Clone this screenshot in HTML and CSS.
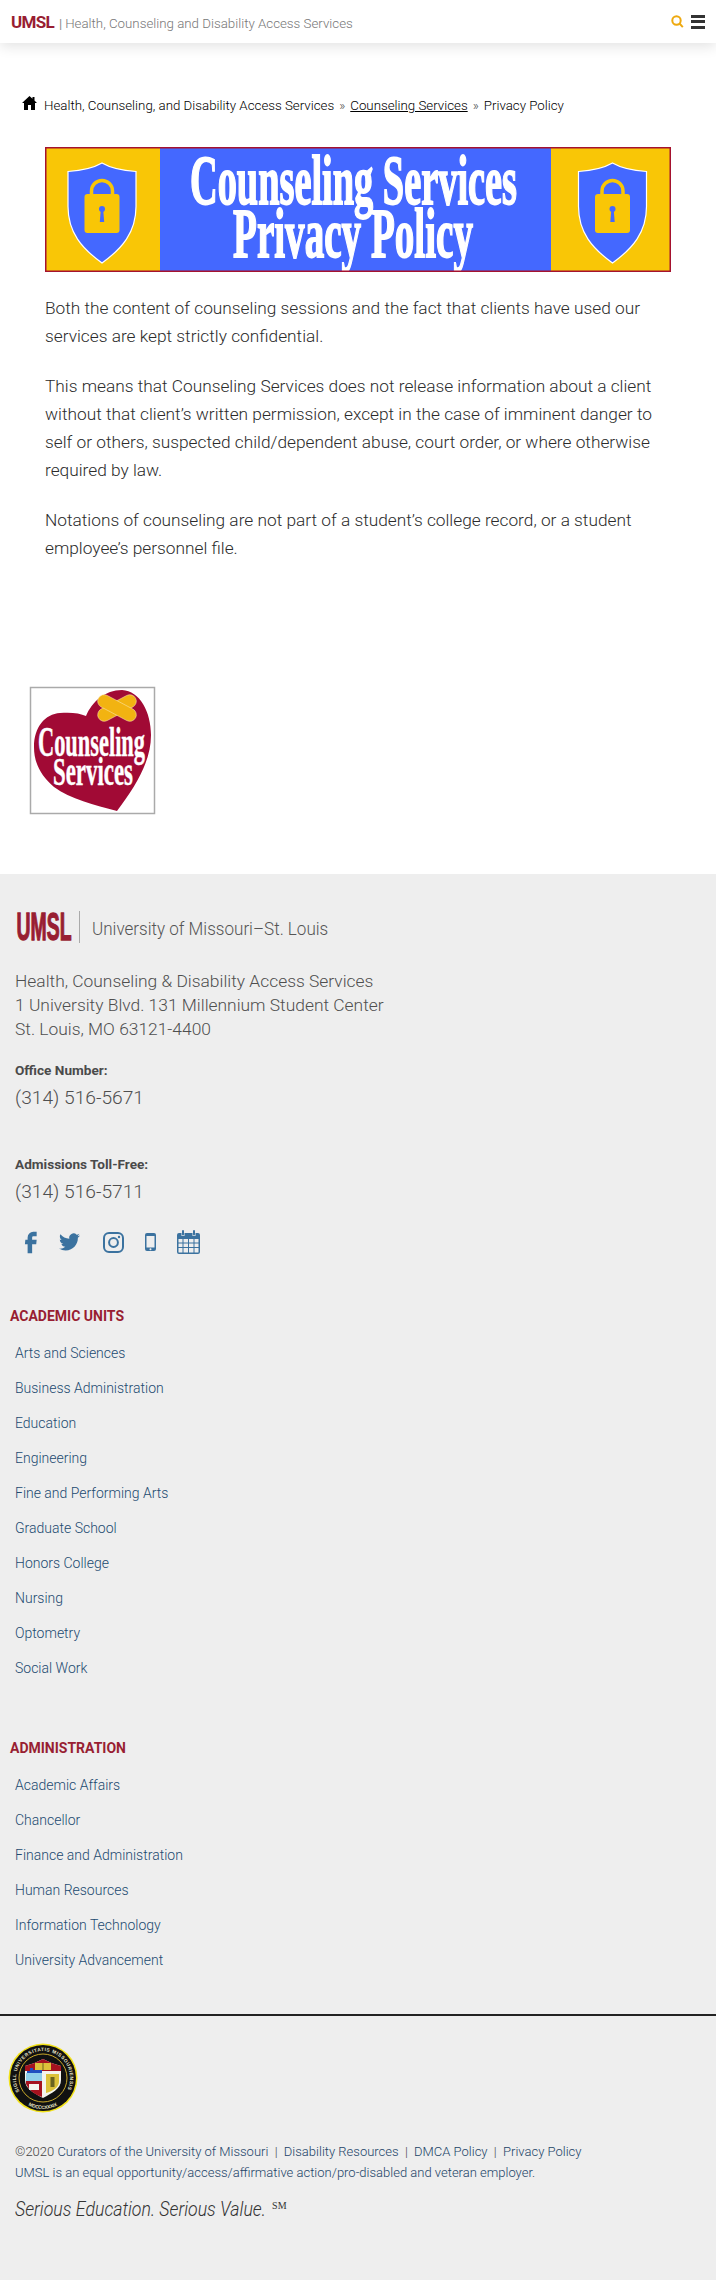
FILE: index.html
```html
<!DOCTYPE html>
<html lang="en">
<head>
<meta charset="utf-8">
<title>Privacy Policy</title>
<link rel="stylesheet" href="styles.css">
</head>
<body>
<header class="topbar">
  <div class="site-id"><b class="site-umsl">UMSL</b><span class="site-sep">|</span><span class="site-name">Health, Counseling and Disability Access Services</span></div>
  <div class="top-tools">
    <svg class="search-icon" viewBox="0 0 13 13"><circle cx="5.5" cy="5.5" r="4.2"/><path d="M8.5 8.5l3.3 3.6"/></svg>
    <span class="burger"><i></i><i></i><i></i></span>
  </div>
</header>

<main>
  <nav class="crumbs">
    <svg class="home-icon" viewBox="0 0 15 14"><path d="M7.5 0L0 7h2v7h4V9h3v5h4V7h2l-2.5-2.4V1h-2v1.7z"/></svg>
    <span>Health, Counseling, and Disability Access Services</span><span class="raquo">»</span><a href="#">Counseling Services</a><span class="raquo">»</span><span>Privacy Policy</span>
  </nav>

  <svg class="banner" viewBox="0 0 626 125">
    <rect class="b-yellow" x="0" y="0" width="626" height="125"/>
    <rect class="b-blue" x="115" y="1" width="391" height="123"/>
    <g>
      <path class="b-shield" d="M57 16q-12 7-34 8.500v35c0 26 14 42 34 56.500c20-14.500 34-30.500 34-56.500v-35q-22-1.500-34-8.500z"/>
      <path class="b-hoop" d="M46.500 50V44a10.500 10.500 0 0 1 21 0v6"/>
      <rect class="b-body" x="39.500" y="47" width="35" height="39" rx="3"/>
      <circle class="b-key" cx="57" cy="62" r="3"/>
      <path class="b-key" d="M55.800 63h2.400l1 12h-4.400z"/>
    </g>
    <g transform="translate(510.500 0)">
      <path class="b-shield" d="M57 16q-12 7-34 8.500v35c0 26 14 42 34 56.500c20-14.500 34-30.500 34-56.500v-35q-22-1.500-34-8.500z"/>
      <path class="b-hoop" d="M46.500 50V44a10.500 10.500 0 0 1 21 0v6"/>
      <rect class="b-body" x="39.500" y="47" width="35" height="39" rx="3"/>
      <circle class="b-key" cx="57" cy="62" r="3"/>
      <path class="b-key" d="M55.800 63h2.400l1 12h-4.400z"/>
    </g>
    <text class="b-title" x="145" y="57" textLength="327" lengthAdjust="spacingAndGlyphs">Counseling Services</text>
    <text class="b-title" x="188" y="110" textLength="240" lengthAdjust="spacingAndGlyphs">Privacy Policy</text>
    <rect class="b-frame" x="0.75" y="0.75" width="624.5" height="123.5"/>
  </svg>

  <article class="copy">
    <p>Both the content of counseling sessions and the fact that clients have used our services are kept strictly confidential.</p>
    <p>This means that Counseling Services does not release information about a client without that client’s written permission, except in the case of imminent danger to self or others, suspected child/dependent abuse, court order, or where otherwise required by law.</p>
    <p>Notations of counseling are not part of a student’s college record, or a student employee’s personnel file.</p>
  </article>

  <svg class="heart-logo" viewBox="0 0 125 127">
    <rect class="h-frame" x="0.500" y="0.500" width="124" height="126"/>
    <path class="h-heart" d="M56 29C62 15 75 3 92 3C110 4 121 25 121 48C121 75 105 100 87 124C65 118 40 112 24 100C10 88 4 75 4 60C4 40 15 27 30 26C40 25 50 26 56 29Z"/>
    <g class="h-band">
      <rect x="66" y="14.500" width="42" height="13" rx="6.500" transform="rotate(-28 87 21)"/>
      <rect x="66" y="14.500" width="42" height="13" rx="6.500" transform="rotate(28 87 21)"/>
    </g>
    <text class="h-text" x="8" y="69" textLength="107" lengthAdjust="spacingAndGlyphs">Counseling</text>
    <text class="h-text h-text2" x="23" y="98" textLength="80" lengthAdjust="spacingAndGlyphs">Services</text>
  </svg>
</main>

<footer class="site-footer">
  <div class="brand">
    <svg class="brand-mark" viewBox="0 0 57 28"><text class="brand-umsl" x="0.500" y="27" textLength="55" lengthAdjust="spacingAndGlyphs">UMSL</text></svg>
    <span class="brand-line"></span>
    <span class="brand-name">University of Missouri–St. Louis</span>
  </div>

  <address class="addr">Health, Counseling &amp; Disability Access Services<br>1 University Blvd. 131 Millennium Student Center<br>St. Louis, MO 63121-4400</address>

  <div class="ph-label ph-first">Office Number:</div>
  <div class="ph-num">(314) 516-5671</div>
  <div class="ph-label ph-second">Admissions Toll-Free:</div>
  <div class="ph-num">(314) 516-5711</div>

  <div class="socials">
    <svg class="ic ic-f" viewBox="6 2.500 11.500 19"><path d="M9.198 21.500h4v-8.010h3.604l.396-3.980h-4V7.500a1 1 0 0 1 1-1h3v-4h-3a5 5 0 0 0-5 5v2.010h-2l-.396 3.980h2.396z"/></svg>
    <svg class="ic ic-t" viewBox="0 2 24 20"><path d="M23.953 4.570a10 10 0 01-2.825.775 4.958 4.958 0 002.163-2.723c-.951.555-2.005.959-3.127 1.184a4.920 4.920 0 00-8.384 4.482C7.690 8.095 4.067 6.130 1.640 3.162a4.822 4.822 0 00-.666 2.475c0 1.710.870 3.213 2.188 4.096a4.904 4.904 0 01-2.228-.616v.060a4.923 4.923 0 003.946 4.827 4.996 4.996 0 01-2.212.085 4.936 4.936 0 004.604 3.417 9.867 9.867 0 01-6.102 2.105c-.390 0-.779-.023-1.170-.067a13.995 13.995 0 007.557 2.209c9.053 0 13.998-7.496 13.998-13.985 0-.210 0-.420-.015-.630A9.935 9.935 0 0024 4.590z"/></svg>
    <svg class="ic ic-i" viewBox="0 0 21 21"><rect class="ic-stroke" x="1" y="1" width="19" height="19" rx="5"/><circle class="ic-stroke" cx="10.500" cy="10.500" r="4.400"/><circle cx="16" cy="5" r="1.200"/></svg>
    <svg class="ic ic-p" viewBox="0 0 11 18"><path fill-rule="evenodd" d="M2 0h7a2 2 0 0 1 2 2v14a2 2 0 0 1-2 2H2a2 2 0 0 1-2-2V2a2 2 0 0 1 2-2zM1.500 3v11.500h8V3zM5.500 15.300a1 1 0 1 0 0 2a1 1 0 0 0 0-2z"/></svg>
    <svg class="ic ic-c" viewBox="0 0 23 24"><path fill-rule="evenodd" d="M2 3h2.500v3h3V3h8v3h3V3H21a2 2 0 0 1 2 2v17a2 2 0 0 1-2 2H2a2 2 0 0 1-2-2V5a2 2 0 0 1 2-2zM1.500 9v3.500h4V9zM6.500 9v3.500h4.500V9zM12 9v3.500h4.500V9zM17.500 9v3.500h4V9zM1.500 13.500V17h4v-3.500zM6.500 13.500V17h4.500v-3.500zM12 13.500V17h4.500v-3.500zM17.500 13.500V17h4v-3.500zM1.500 18v4a.5.5 0 0 0 .5.500h3.500V18zM6.500 18v4.500H11V18zM12 18v4.500h4.500V18zM17.500 18v4.500H21a.5.5 0 0 0 .5-.5v-4z"/><rect x="5" y="0" width="2" height="5.500" rx="1"/><rect x="16" y="0" width="2" height="5.500" rx="1"/></svg>
  </div>

  <section class="unit unit-first">
    <h2>ACADEMIC UNITS</h2>
    <ul>
      <li><a href="#">Arts and Sciences</a></li>
      <li><a href="#">Business Administration</a></li>
      <li><a href="#">Education</a></li>
      <li><a href="#">Engineering</a></li>
      <li><a href="#">Fine and Performing Arts</a></li>
      <li><a href="#">Graduate School</a></li>
      <li><a href="#">Honors College</a></li>
      <li><a href="#">Nursing</a></li>
      <li><a href="#">Optometry</a></li>
      <li><a href="#">Social Work</a></li>
    </ul>
  </section>
  <section class="unit">
    <h2>ADMINISTRATION</h2>
    <ul>
      <li><a href="#">Academic Affairs</a></li>
      <li><a href="#">Chancellor</a></li>
      <li><a href="#">Finance and Administration</a></li>
      <li><a href="#">Human Resources</a></li>
      <li><a href="#">Information Technology</a></li>
      <li><a href="#">University Advancement</a></li>
    </ul>
  </section>

  <hr class="rule">

  <svg class="seal" viewBox="0 0 70 70">
    <defs>
      <path id="seal-top" d="M11.600 48.500A27 27 0 1 1 58.400 48.500"/>
      <path id="seal-bot" d="M19.500 61.800A31 31 0 0 0 50.500 61.800"/>
    </defs>
    <circle class="s-rim" cx="35" cy="35" r="34.500"/>
    <circle class="s-black" cx="35" cy="35" r="33"/>
    <circle class="s-ring" cx="35" cy="35" r="24"/>
    <text class="s-txt"><textPath href="#seal-top" textLength="110">SIGILL UNIVERSITATIS MISSOURIENSIS</textPath></text>
    <text class="s-txt"><textPath href="#seal-bot" startOffset="1" textLength="30">MDCCCXXXIX</textPath></text>
    <path class="s-white" d="M17 23q9-2 18-7q9 5 18 7v14c0 9-9 13-18 18c-9-5-18-9-18-18z"/>
    <path class="s-red" d="M17 23q9-2 18-7q9 5 18 7v5H17z"/>
    <rect class="s-gold" x="27" y="20" width="16" height="7"/>
    <path class="s-dark" d="M34.500 20h1v7h-1z"/>
    <path class="s-blue" d="M19 30h15v-3H25v-2h-3v3h-3z"/>
    <rect class="s-sky" x="18" y="30" width="16" height="8"/>
    <path class="s-red" d="M18 38h16v16q-12-4-16-13z"/>
    <rect class="s-white" x="21" y="41" width="10" height="6"/>
    <path class="s-gold" d="M38 31h13v8c0 5-6 9-13 11z"/>
    <path class="s-dark" d="M42.500 34h4v10h-4z"/>
  </svg>

  <div class="legal">
    <p><span class="legal-gray">©2020</span> <a href="#">Curators of the University of Missouri</a><span class="legal-pipe">|</span><a href="#">Disability Resources</a><span class="legal-pipe">|</span><a href="#">DMCA Policy</a><span class="legal-pipe">|</span><a href="#">Privacy Policy</a></p>
    <p><a href="#">UMSL is an equal opportunity/access/affirmative action/pro-disabled and veteran employer.</a></p>
  </div>
  <p class="slogan"><em class="slogan-text">Serious Education. Serious Value.</em><sup>SM</sup></p>
</footer>
</body>
</html>
```

FILE: styles.css
```css
* { box-sizing: border-box; }
html, body { margin: 0; padding: 0; background: #fff; }
body { font-family: Roboto, "Liberation Sans", sans-serif; color: #444; overflow-x: hidden; }
a { color: inherit; text-decoration: none; }
svg { display: block; overflow: visible; }

.topbar { height: 43px; background: #fff; box-shadow: 0 3px 14px rgba(0,0,0,.12); display: flex; align-items: center; justify-content: space-between; padding: 0 11px; }
.site-id { display: flex; align-items: baseline; font-size: 14px; color: #8a8a8a; }
.site-umsl { font-size: 17px; letter-spacing: -.7px; color: #981e32; font-weight: 700; }
.site-sep { margin: 0 3px 0 5px; font-size: 13px; }
.site-name { font-size: 13.300px; font-weight: 300; color: #777; }
.top-tools { display: flex; align-items: center; gap: 7px; }
.search-icon { width: 13px; height: 13px; fill: none; stroke: #eea90f; stroke-width: 2; }
.burger { display: flex; flex-direction: column; gap: 2.500px; width: 14px; }
.burger i { display: block; height: 3px; background: #333; }

.crumbs { margin: 52px 0 0 22px; height: 20px; display: flex; align-items: center; font-size: 13.300px; font-weight: 300; color: #000; }
.home-icon { width: 15px; height: 14px; fill: #000; margin-right: 7px; margin-top: -4px; }
.crumbs a { text-decoration: underline; }
.raquo { margin: 0 5px; color: #444; }

.banner { width: 626px; height: 125px; margin: 32px 0 0 45px; }
.b-yellow { fill: #f9c606; }
.b-blue { fill: #4468ff; }
.b-frame { fill: none; stroke: #a5122f; stroke-width: 1.500; }
.b-shield { fill: #4468ff; stroke: #fff; stroke-width: 1.200; }
.b-hoop { fill: none; stroke: #f9c606; stroke-width: 3.500; }
.b-body { fill: #f9c606; }
.b-key { fill: #4468ff; }
.b-title { font-family: "Liberation Serif", serif; font-weight: 700; font-size: 70px; fill: #fff; stroke: #fff; stroke-width: 1.800; }

.copy { margin: 22px 45px 0; font-size: 17.300px; line-height: 28px; font-weight: 300; color: #2b2b2b; }
.copy p { margin: 0 0 22px; }
.copy p:last-child { margin-bottom: 0; }

.heart-logo { width: 125px; height: 127px; margin: 125px 0 60px 30px; }
.h-frame { fill: #fff; stroke: #aaa; stroke-width: 1.500; }
.h-heart { fill: #a10a35; }
.h-band rect { fill: #f2b311; stroke: #fbe7b0; stroke-width: .5; }
.h-text { font-family: "Liberation Serif", serif; font-weight: 700; font-size: 43px; fill: #fff; stroke: #fff; stroke-width: .5; }
.h-text2 { font-size: 39px; }

.site-footer { background: #eee; padding: 37px 0 57px; color: #444; }
.brand { display: flex; align-items: center; height: 32px; margin-left: 16px; }
.brand-mark { width: 57px; height: 28px; }
.brand-umsl { font-family: "Liberation Sans", sans-serif; font-weight: 700; font-size: 38px; fill: #981e32; stroke: #981e32; stroke-width: 1.300; }
.brand-line { width: 1px; height: 32px; background: #aaa; margin: 0 11.500px 0 6px; }
.brand-name { font-size: 19px; font-weight: 300; color: #555; display: inline-block; transform: scaleX(.897); transform-origin: left center; margin-top: 3px; }

.addr { font-style: normal; margin: 26px 0 0 15px; font-size: 17.400px; line-height: 24px; font-weight: 300; color: #4f4f4f; }
.ph-label { margin-left: 15px; font-size: 13.600px; line-height: 20px; font-weight: 700; color: #4a4a4a; }
.ph-first { margin-top: 19px; }
.ph-second { margin-top: 41px; }
.ph-num { margin: 3px 0 0 15px; font-size: 19.200px; line-height: 30px; font-weight: 300; color: #4f4f4f; }

.socials { display: flex; align-items: center; height: 26px; margin: 22px 0 0 24px; }
.ic { fill: #3b729f; flex: none; }
.ic-stroke { fill: none; stroke: #3b729f; stroke-width: 2; }
.ic-f { width: 13px; height: 23px; }
.ic-t { width: 21px; height: 18px; margin-left: 22px; }
.ic-i { width: 21px; height: 21px; margin-left: 23px; }
.ic-p { width: 11px; height: 18px; margin-left: 21px; }
.ic-c { width: 23px; height: 24px; margin-left: 21px; }

.unit { margin-top: 52px; }
.unit-first { margin-top: 51px; }
.unit h2 { margin: 0 0 0 10px; font-size: 14px; line-height: 20px; font-weight: 700; color: #981e32; }
.unit ul { list-style: none; margin: 10px 0 0; padding: 0 0 0 15px; }
.unit li { height: 35px; line-height: 35px; font-size: 14px; font-weight: 300; color: #224a70; }

.rule { margin: 36px 0 0; border: 0; height: 2px; background: #222; }

.seal { width: 70px; height: 70px; margin: 27px 0 0 8px; }
.s-rim { fill: #f2e21a; }
.s-black { fill: #111; }
.s-ring { fill: #111; stroke: #c9a92a; stroke-width: 1; }
.s-txt { font-family: "Liberation Sans", sans-serif; font-weight: 700; font-size: 4.800px; fill: #e8e6c8; }
.s-white { fill: #f4f4ee; }
.s-red { fill: #a5121f; }
.s-gold { fill: #dcc23a; }
.s-blue { fill: #1f4fc0; }
.s-sky { fill: #8fd0ea; }
.s-dark { fill: #6a6420; }

.legal { margin: 28px 0 0 15px; font-size: 13px; line-height: 21px; font-weight: 300; color: #1c4468; }
.legal p { margin: 0; }
.legal-gray { color: #444; }
.legal-pipe { margin: 0 6.300px; color: #444; }

.slogan { margin: 12px 0 0 15px; font-size: 20px; line-height: 28px; font-weight: 300; color: #333; }
.slogan-text { display: inline-block; transform: scaleX(.886); transform-origin: left center; margin-right: -32px; }
.slogan sup { font-family: "Liberation Serif", serif; font-size: 10px; margin-left: 6px; line-height: 0; vertical-align: 7px; }
```
